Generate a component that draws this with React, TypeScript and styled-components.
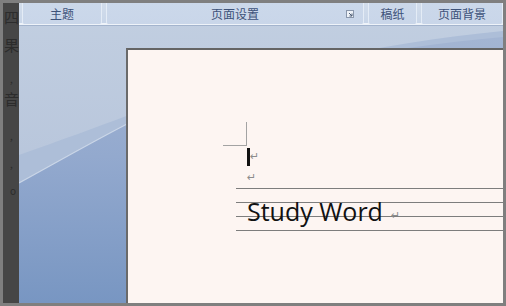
import * as React from 'react'
import styled, { createGlobalStyle } from 'styled-components'

const GlobalStyle = createGlobalStyle`
  html, body {
    margin: 0;
    padding: 0;
    background: #7f7f7f;
  }
  * {
    box-sizing: border-box;
  }
`

const Frame = styled.div`
  display: flex;
  width: 506px;
  height: 306px;
  padding: 3px;
  background: #7f7f7f;
  overflow: hidden;
`

const SideStrip = styled.div`
  display: flex;
  flex-direction: column;
  width: 16px;
  padding-top: 5px;
  background: #464646;
  overflow: hidden;
  font-family: 'Noto Sans CJK SC', sans-serif;
  color: #2c2c2c;
`

const SideGlyph = styled.span<{ $gap: number; $small?: boolean }>`
  display: block;
  margin-top: ${p => p.$gap}px;
  padding-left: ${p => (p.$small ? 7 : 1)}px;
  font-size: ${p => (p.$small ? 10 : 15)}px;
  line-height: ${p => (p.$small ? 9 : 18)}px;
  white-space: nowrap;
`

const Workspace = styled.div`
  position: relative;
  display: flex;
  flex: 1;
  flex-direction: column;
  min-width: 0;
  background: linear-gradient(180deg, #c2cfe1 0%, #b7c5db 60%, #adbdd7 100%);
`

const Backdrop = styled.svg`
  position: absolute;
  top: 0;
  left: 0;
  width: 100%;
  height: 100%;
`

const Ribbon = styled.div`
  position: relative;
  display: flex;
  gap: 4px;
  height: 23px;
  padding: 0 0 2px 3px;
  border-bottom: 1px solid #a3b4cd;
  background: linear-gradient(180deg, #d2ddeb 0%, #c7d5e8 100%);
  box-shadow: inset 0 -2px 0 #eef3f9;
`

const RibbonButton = styled.div<{ $width?: number }>`
  position: relative;
  display: flex;
  align-items: center;
  justify-content: center;
  flex: ${p => (p.$width ? `0 0 ${p.$width}px` : '1')};
  height: 21px;
  border-left: 1px solid #e4ecf6;
  border-right: 1px solid #e4ecf6;
  border-radius: 0 0 2px 2px;
  background: linear-gradient(180deg, #cbd8ea 0%, #c9d6e9 100%);
  font-family: 'Noto Sans CJK SC', sans-serif;
  font-size: 12px;
  color: #3d5279;
`

const Launcher = styled.svg`
  position: absolute;
  top: 7px;
  right: 9px;
  width: 8px;
  height: 8px;
`

const Canvas = styled.div`
  position: relative;
  display: flex;
  flex: 1;
  padding: 22px 0 0 107px;
`

const Page = styled.div`
  flex: 1;
  padding: 72px 0 0 95px;
  border-top: 2px solid #646464;
  border-left: 2px solid #6a6a6a;
  background: #fdf5f2;
`

const CornerMark = styled.div`
  width: 24px;
  height: 24px;
  border-right: 1px solid #a3a3a3;
  border-bottom: 1px solid #a3a3a3;
`

const Body = styled.div`
  padding-left: 24px;
`

const ParaRow = styled.div<{ $height: number }>`
  display: flex;
  align-items: center;
  height: ${p => p.$height}px;
`

const Caret = styled.span`
  display: block;
  width: 3px;
  height: 18px;
  background: #111;
`

const ReturnMark = styled.span`
  font-family: 'DejaVu Sans', sans-serif;
  font-size: 11px;
  line-height: 1;
  color: #8c8c8c;
`

const Ruled = styled.div`
  display: flex;
  align-items: flex-end;
  height: 43px;
  margin-left: -11px;
  padding: 0 0 7px 11px;
  background: repeating-linear-gradient(180deg, #7d7d7d 0px, #7d7d7d 1px, transparent 1px, transparent 14px);
`

const Heading = styled.span`
  font-family: 'Open Sans', sans-serif;
  font-size: 25px;
  line-height: 25px;
  color: #111;
`

const TrailMark = styled(ReturnMark)`
  margin: 0 0 3px 8px;
`

export default function App() {
  return (
    <Frame>
      <GlobalStyle />
      <SideStrip>
        <SideGlyph $gap={0}>四</SideGlyph>
        <SideGlyph $gap={10}>果</SideGlyph>
        <SideGlyph $gap={20} $small>,</SideGlyph>
        <SideGlyph $gap={7}>音</SideGlyph>
        <SideGlyph $gap={23} $small>,</SideGlyph>
        <SideGlyph $gap={19} $small>,</SideGlyph>
        <SideGlyph $gap={18} $small>o</SideGlyph>
      </SideStrip>
      <Workspace>
        <Backdrop viewBox="0 0 484 300" preserveAspectRatio="none">
          <defs>
            <linearGradient id="deep" x1="0" y1="0" x2="0" y2="1">
              <stop offset="0" stopColor="#a3b5d3" />
              <stop offset="0.45" stopColor="#93a9ce" />
              <stop offset="1" stopColor="#7896c2" />
            </linearGradient>
          </defs>
          <path d="M0 152 C40 138 75 125 110 112 C220 70 360 40 484 28 L484 300 L0 300 Z" fill="#adbed8" />
          <path d="M0 180 C40 158 75 138 110 120 C220 70 360 45 484 34 L484 300 L0 300 Z" fill="url(#deep)" />
          <path d="M0 180 C40 158 75 138 110 120" stroke="#d4deec" strokeWidth="1.2" fill="none" opacity="0.8" />
        </Backdrop>
        <Ribbon>
          <RibbonButton $width={80}>主题</RibbonButton>
          <RibbonButton $width={258}>
            页面设置
            <Launcher viewBox="0 0 8 8">
              <rect x="0.5" y="0.5" width="7" height="7" fill="#eef2f7" stroke="#8a97ab" />
              <path d="M3 3 L6 6 M6 3.5 V6 H3.5" stroke="#4a5a72" strokeWidth="1" fill="none" />
            </Launcher>
          </RibbonButton>
          <RibbonButton $width={49}>稿纸</RibbonButton>
          <RibbonButton>页面背景</RibbonButton>
        </Ribbon>
        <Canvas>
          <Page>
            <CornerMark />
            <Body>
              <ParaRow $height={21}>
                <Caret />
                <ReturnMark>↵</ReturnMark>
              </ParaRow>
              <ParaRow $height={21}>
                <ReturnMark>↵</ReturnMark>
              </ParaRow>
              <Ruled>
                <Heading>Study Word</Heading>
                <TrailMark>↵</TrailMark>
              </Ruled>
            </Body>
          </Page>
        </Canvas>
      </Workspace>
    </Frame>
  )
}
